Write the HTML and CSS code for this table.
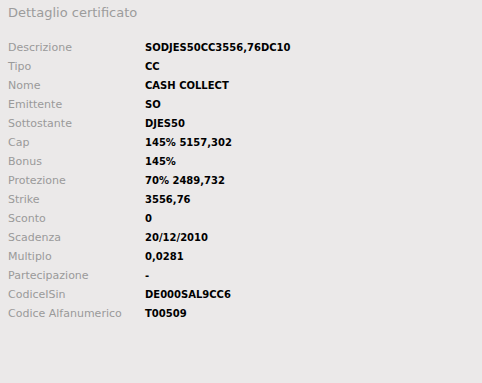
FILE: index.html
```html
<!DOCTYPE html>
<html lang="it">
<head>
    <meta charset="UTF-8">
    <title>Dettaglio certificato</title>
    <link rel="stylesheet" href="styles.css">
</head>
<body>
    <div class="panel">
        <h1>Dettaglio certificato</h1>
        <table class="details">
            <tr><td class="label">Descrizione</td><td class="value">SODJES50CC3556,76DC10</td></tr>
            <tr><td class="label">Tipo</td><td class="value">CC</td></tr>
            <tr><td class="label">Nome</td><td class="value">CASH COLLECT</td></tr>
            <tr><td class="label">Emittente</td><td class="value">SO</td></tr>
            <tr><td class="label">Sottostante</td><td class="value">DJES50</td></tr>
            <tr><td class="label">Cap</td><td class="value">145% 5157,302</td></tr>
            <tr><td class="label">Bonus</td><td class="value">145%</td></tr>
            <tr><td class="label">Protezione</td><td class="value">70% 2489,732</td></tr>
            <tr><td class="label">Strike</td><td class="value">3556,76</td></tr>
            <tr><td class="label">Sconto</td><td class="value">0</td></tr>
            <tr><td class="label">Scadenza</td><td class="value">20/12/2010</td></tr>
            <tr><td class="label">Multiplo</td><td class="value">0,0281</td></tr>
            <tr><td class="label">Partecipazione</td><td class="value">-</td></tr>
            <tr><td class="label">CodiceISin</td><td class="value">DE000SAL9CC6</td></tr>
            <tr><td class="label">Codice Alfanumerico</td><td class="value">T00509</td></tr>
        </table>
    </div>
</body>
</html>
```

FILE: styles.css
```css
body {
    margin: 0;
    background: #ebe9e9;
    font-family: 'DejaVu Sans', Verdana, sans-serif;
    font-size: 10px;
}
.panel {
    padding: 4px 8px;
}
h1 {
    margin: 0 0 16px;
    font-size: 13px;
    font-weight: normal;
    color: #9c9c9c;
    line-height: 18px;
}
.details {
    border-collapse: collapse;
}
.details td {
    padding: 0;
    height: 19px;
    vertical-align: middle;
}
.label {
    width: 137px;
    font-size: 11px;
    color: #9a9a9a;
}
.value {
    color: #000000;
    font-weight: bold;
}
```
